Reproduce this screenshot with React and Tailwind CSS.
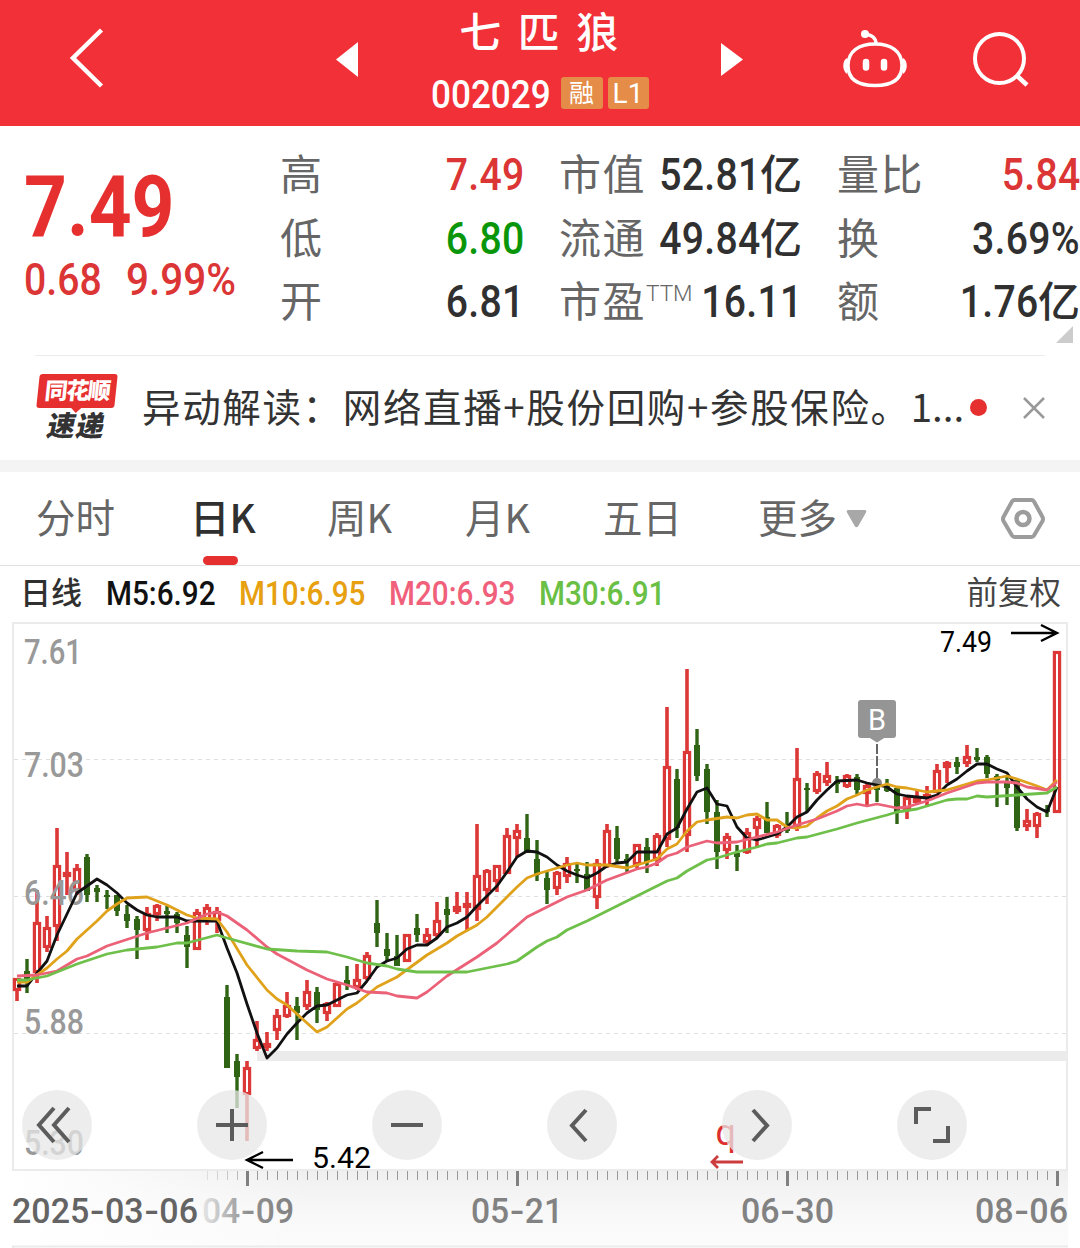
import React from "react";
import clsx from "clsx";

const RED = "#dc3838";
const GREEN = "#2f6414";

// [high, body top, body bottom, low, up(1) / down(0)], one candle every 10px
const candles = [
  [978, 978, 991, 1001, 1], [959, 971, 980, 993, 0], [890, 922, 973, 983, 1],
  [916, 927, 948, 952, 1], [828, 865, 927, 941, 1], [852, 872, 877, 895, 1],
  [864, 868, 891, 895, 1], [854, 857, 895, 902, 0], [885, 888, 892, 902, 0],
  [890, 895, 897, 909, 0], [895, 895, 911, 916, 0], [905, 914, 921, 928, 0],
  [916, 919, 930, 959, 0], [907, 913, 931, 940, 1], [904, 905, 915, 921, 1],
  [906, 911, 914, 933, 0], [912, 914, 923, 933, 0], [926, 935, 947, 968, 0],
  [909, 912, 950, 950, 1], [904, 907, 920, 925, 1], [907, 911, 921, 933, 1],
  [985, 997, 1068, 1068, 0], [1054, 1061, 1077, 1108, 0], [1061, 1067, 1095, 1141, 1],
  [1021, 1039, 1049, 1051, 1], [1032, 1043, 1048, 1051, 1], [1009, 1015, 1031, 1040, 1],
  [992, 1005, 1017, 1018, 1], [997, 1006, 1013, 1040, 0], [980, 991, 1007, 1010, 1],
  [987, 992, 1010, 1023, 0], [1002, 1003, 1014, 1021, 1], [982, 983, 1007, 1007, 1],
  [966, 980, 985, 990, 0], [964, 979, 988, 990, 1], [952, 955, 979, 980, 1],
  [900, 923, 933, 947, 0], [933, 949, 956, 962, 0], [935, 956, 966, 966, 0],
  [934, 934, 962, 962, 1], [914, 928, 935, 942, 0], [928, 934, 943, 946, 1],
  [902, 920, 936, 937, 1], [897, 909, 915, 933, 0], [892, 906, 912, 914, 1],
  [892, 903, 908, 930, 1], [824, 875, 910, 921, 1], [869, 870, 891, 904, 1],
  [865, 865, 882, 892, 1], [828, 835, 874, 874, 1], [824, 830, 839, 857, 1],
  [814, 838, 853, 853, 0], [840, 859, 875, 881, 0], [872, 878, 890, 904, 0],
  [871, 872, 889, 895, 1], [857, 863, 877, 883, 1], [864, 869, 871, 883, 0],
  [862, 874, 891, 891, 0], [859, 863, 898, 909, 1], [824, 830, 867, 868, 1],
  [826, 838, 859, 862, 0], [854, 859, 861, 872, 0], [844, 844, 865, 868, 1],
  [838, 847, 862, 873, 0], [833, 835, 860, 866, 1], [707, 766, 840, 847, 1],
  [769, 779, 828, 838, 0], [669, 751, 836, 852, 1], [729, 745, 776, 781, 0],
  [764, 769, 812, 824, 0], [800, 812, 852, 869, 0], [833, 836, 851, 859, 1],
  [845, 853, 857, 871, 0], [828, 832, 853, 854, 1], [816, 818, 829, 847, 1],
  [802, 817, 833, 833, 0], [824, 825, 836, 838, 1], [812, 825, 831, 833, 0],
  [748, 778, 827, 831, 1], [783, 788, 790, 812, 0], [771, 773, 792, 794, 1],
  [762, 775, 783, 786, 1], [776, 781, 784, 793, 0], [774, 775, 787, 788, 1],
  [774, 777, 790, 794, 0], [783, 785, 794, 805, 1], [783, 785, 790, 802, 0],
  [779, 786, 791, 792, 0], [788, 788, 812, 824, 0], [796, 797, 811, 819, 1],
  [791, 797, 803, 805, 1], [786, 794, 799, 807, 1], [764, 770, 793, 793, 1],
  [761, 762, 768, 783, 1], [757, 762, 767, 774, 0], [745, 756, 764, 767, 1],
  [748, 757, 760, 762, 0], [755, 757, 774, 778, 0], [774, 776, 780, 807, 0],
  [777, 783, 788, 805, 0], [780, 780, 828, 831, 0], [809, 820, 827, 831, 1],
  [812, 813, 827, 838, 1], [805, 809, 812, 817, 0], [651, 651, 813, 813, 1],
];

const averages = [
  {
    color: "#111111",
    points:
      "17,986 27,986 37,973 47,961 57,935 67,914 77,893 87,886 97,879 107,885 117,893 127,903 137,910 147,915 157,917 177,917 187,921 217,921 227,948 237,973 247,1004 257,1033 267,1058 277,1048 287,1034 297,1023 307,1013 317,1006 327,1005 337,1000 347,995 357,993 367,981 377,967 387,961 397,958 407,949 417,945 427,945 437,938 447,927 457,923 467,917 477,906 487,896 497,886 507,872 517,857 527,851 537,852 547,857 557,865 567,871 577,875 587,878 597,873 607,866 617,863 627,862 637,852 657,852 667,834 677,828 687,809 697,792 707,788 717,804 727,806 737,827 747,838 757,840 767,837 777,834 787,827 797,817 807,812 817,800 827,790 837,781 857,780 867,783 877,785 887,787 897,794 907,796 917,797 927,798 937,795 947,785 957,779 967,771 977,764 987,764 997,769 1007,773 1017,787 1027,799 1037,807 1047,812 1057,787",
  },
  {
    color: "#e0a11b",
    points:
      "17,982 27,982 37,975 47,968 57,959 67,951 77,939 97,921 107,911 117,904 127,898 147,897 167,905 187,915 197,918 217,919 227,932 247,965 267,990 277,999 287,1005 297,1014 317,1032 327,1027 347,1009 357,1003 377,987 397,977 427,955 447,943 457,936 477,925 487,917 517,887 527,878 537,874 567,865 577,863 587,865 607,865 627,868 647,862 657,859 667,849 677,844 687,831 697,822 707,820 727,817 737,818 747,815 757,814 767,820 777,820 787,827 797,828 807,826 817,818 827,811 837,806 847,799 857,795 867,790 887,784 897,787 907,788 927,792 947,790 977,781 987,780 1007,776 1017,779 1037,786 1047,790 1057,780",
  },
  {
    color: "#ea6178",
    points:
      "17,976 37,975 57,971 77,959 87,956 107,946 147,933 187,923 207,914 217,912 227,916 247,930 267,947 277,954 307,970 327,979 347,985 367,992 387,993 397,996 417,998 427,992 447,976 477,957 497,943 527,917 547,907 567,897 587,890 607,880 637,869 647,867 657,863 667,856 677,853 687,847 707,841 717,843 737,842 757,837 777,832 797,825 817,819 837,811 847,806 857,804 867,806 877,804 897,808 907,807 927,801 947,793 977,783 987,782 1007,782 1017,783 1027,787 1047,790 1057,782",
  },
  {
    color: "#6fbf4b",
    points:
      "17,980 27,980 47,976 77,964 107,954 127,950 157,947 177,943 187,943 217,935 227,938 267,949 297,951 327,952 347,957 367,963 387,966 397,969 417,972 467,972 487,968 507,964 517,961 537,947 547,941 557,937 567,930 587,921 617,906 647,891 657,886 667,881 677,878 687,871 707,860 717,858 737,852 757,847 767,844 777,843 797,838 807,837 837,829 857,823 887,815 897,812 917,809 947,800 957,799 967,799 977,796 987,797 1017,795 1047,793 1057,787",
  },
];

const priceLabels = [
  { text: "7.61", y: 664, w: 58 },
  { text: "7.03", y: 777, w: 60 },
  { text: "6.46", y: 905, w: 60 },
  { text: "5.88", y: 1034, w: 60 },
  { text: "5.30", y: 1155, w: 60 },
];

const dates = [
  { text: "2025-03-06", x: 12, w: 186, fill: "#646464" },
  { text: "04-09", x: 202, w: 92, fill: "url(#dateFade)" },
  { text: "05-21", x: 471, w: 92, fill: "#828282" },
  { text: "06-30", x: 741, w: 93, fill: "#828282" },
  { text: "08-06", x: 975, w: 93, fill: "#828282" },
];

const stats = [
  [
    { label: "高", value: "7.49", color: "text-[#dc3535]" },
    { label: "低", value: "6.80", color: "text-[#0a960a]" },
    { label: "开", value: "6.81" },
  ],
  [
    { label: "市值", value: "52.81", unit: "亿" },
    { label: "流通", value: "49.84", unit: "亿" },
    { label: "市盈", sup: "TTM", value: "16.11" },
  ],
  [
    { label: "量比", value: "5.84", color: "text-[#dc3535]" },
    { label: "换", value: "3.69%" },
    { label: "额", value: "1.76", unit: "亿" },
  ],
];

const Header = () => (
  <header className="grid h-[126px] grid-cols-[336px_22px_363px_22px_337px] bg-[#f13038] text-white">
    <div className="pl-[68px] pt-[26px]">
      <svg width="38" height="64" fill="none" stroke="white" strokeWidth="4.5">
        <path d="M33.500 4L5 32L33.500 60" />
      </svg>
    </div>
    <svg className="mt-[42px]" width="22" height="36" fill="white">
      <path d="M22 0V35L0 17.500Z" />
    </svg>
    <div className="flex flex-col items-center">
      <h1 className="mt-[2px] h-[56px] whitespace-pre pl-[2px] text-[42px] font-medium leading-[56px] tracking-[3.5px]">
        七 匹 狼
      </h1>
      <div className="mt-[19px] flex h-8 items-center gap-[5px]">
        <div className="flex w-[125px] justify-start">
          <span className="origin-left scale-x-[0.9] pt-[3px] font-[Roboto] text-[39px] font-medium leading-8">
            002029
          </span>
        </div>
        <span className="h-8 w-[42px] rounded-[3px] bg-[#e48c48] text-center text-[25px] leading-[29px]">
          融
        </span>
        <span className="h-8 w-[41px] rounded-[3px] bg-[#e48c48] text-center font-[Roboto] text-[28px] leading-[33px]">
          L1
        </span>
      </div>
    </div>
    <svg className="mt-[43px]" width="22" height="34" fill="white">
      <path d="M0 0V33L22 16.500Z" />
    </svg>
    <div className="flex gap-[62px] pl-[98px] pt-[26px]">
      <svg width="68" height="66" fill="none" stroke="white" strokeWidth="3.500">
        <path d="M34 18C50 18 61 25 61 39.500S50 59.500 34 59.500S7 54 7 39.500S18 18 34 18Z" />
        <path d="M35 18C35 12 31 8.500 24 8.500" strokeWidth="3.500" />
        <circle cx="24" cy="8" r="4" fill="white" stroke="none" />
        <path
          d="M6 32C1 34 1 45 6 48ZM62 32C67 34 67 45 62 48Z"
          fill="white"
          stroke="none"
        />
        <path d="M25 36V41.500M43 36V41.500" strokeWidth="6.500" strokeLinecap="round" />
      </svg>
      <svg width="62" height="66" fill="none" stroke="white" strokeWidth="4">
        <circle cx="28.500" cy="32.500" r="24.500" />
        <path d="M45 49L56 59" strokeWidth="4.500" />
      </svg>
    </div>
  </header>
);

const StatRow = ({ label, sup, value, unit, color = "text-[#303030]" }) => (
  <div className="flex h-[63.500px] items-center justify-between">
    <span className="-mt-1.5 flex shrink-0 text-[42px] leading-[63px] tracking-[1.5px] text-[#666]">
      {label}
      {sup && (
        <sup className="-mr-3 mt-[26px] font-[Roboto] text-[22.500px] font-light leading-none tracking-[0px]">
          {sup}
        </sup>
      )}
    </span>
    <span className={clsx("flex items-center font-medium", color)}>
      <span className="origin-right scale-x-[0.9] pt-0.5 font-[Roboto] text-[43.500px] leading-[63px] tracking-[0.3px]">
        {value}
      </span>
      {unit && <span className="-mt-1.5 text-[42px] leading-[63px]">{unit}</span>}
    </span>
  </div>
);

const Quote = () => (
  <section className="relative flex h-[229px] pt-[17px]">
    <div className="w-[280px] pl-[24px] pt-[19px]">
      <div className="origin-left scale-x-[0.87] font-[Roboto] text-[86px] font-bold leading-[90px] text-[#e63030]">
        7.49
      </div>
      <div className="flex pt-0.5 font-[Roboto] text-[43.500px] font-medium leading-[54px] text-[#dc3535]">
        <span className="w-[102px] origin-left scale-x-[0.9]">0.68</span>
        <span className="origin-left scale-x-[0.93]">9.99%</span>
      </div>
    </div>
    <div className="grid grid-cols-[244px_243px_243px] gap-[35px]">
      {stats.map((column, i) => (
        <div key={i}>
          {column.map((row) => (
            <StatRow key={row.label} {...row} />
          ))}
        </div>
      ))}
    </div>
    <svg className="absolute right-[7px] top-[200px]" width="17" height="17" fill="#ccc">
      <path d="M17 0V17H0Z" />
    </svg>
  </section>
);

const News = () => (
  <section className="flex h-[105px] px-[35px]">
    <div className="flex w-full items-start border-t border-[#ebebeb]">
      <div className="mt-[18px] flex w-[84px] shrink-0 flex-col items-center">
        <div className="relative flex h-[34px] w-[78px] -skew-x-6 items-center justify-center rounded-[3px] bg-[#e63030]">
          <span className="-mt-1 text-[23px] font-black leading-[34px] tracking-[-1.5px] text-white">
            同花顺
          </span>
          <svg className="absolute left-[34px] top-[33px]" width="12" height="6" fill="#e63030">
            <path d="M0 0H12L6 6Z" />
          </svg>
        </div>
        <span className="-skew-x-12 text-[28px] font-black leading-[32px] tracking-[1px] text-[#333]">
          速递
        </span>
      </div>
      <p className="ml-[23px] mt-[22px] w-[828px] shrink-0 whitespace-nowrap text-[38.500px] leading-[54px] tracking-[1.65px] text-[#333]">
        异动解读：网络直播+股份回购+参股保险。
        <span className="tracking-[0px]">1...</span>
      </p>
      <span className="mt-[43px] h-[17px] w-[17px] shrink-0 rounded-full bg-[#e63030]" />
      <svg className="ml-[35px] mt-[40px] shrink-0" width="24" height="24" stroke="#999" strokeWidth="2.500">
        <path d="M2 2L22 22M22 2L2 22" />
      </svg>
    </div>
  </section>
);

const tabs = [
  { name: "分时", width: "w-[154px]" },
  { name: "日K", width: "w-[137px]", active: true },
  { name: "周K", width: "w-[138px]" },
  { name: "月K", width: "w-[138px]" },
  { name: "五日", width: "w-[155px]" },
];

const Tabs = () => (
  <nav className="flex h-[94px] border-b border-[#e2e2e2] pl-[36px] text-[39.500px] leading-[88px] text-[#666]">
    {tabs.map((tab) => (
      <button
        key={tab.name}
        className={clsx("relative flex", tab.width, tab.active && "font-medium text-[#303030]")}
      >
        {tab.name}
        {tab.active && (
          <span className="absolute bottom-0 left-[13px] h-[9px] w-[35px] rounded-full bg-[#e63030]" />
        )}
      </button>
    ))}
    <button className="flex w-[242px]">
      更多
      <svg className="ml-[9px] mt-[38px]" width="21" height="18" fill="#a8a8a8">
        <path d="M1.500 0H19.500Q21 1 20 2.500L12 16.500Q10.500 18 9 16.500L1 2.500Q0 1 1.500 0Z" />
      </svg>
    </button>
    <svg className="mt-[25px]" width="46" height="44" fill="none" stroke="#9c9c9c" strokeWidth="4">
      <path d="M14.500 3H31.500Q33 3 34 4.500L42.500 20Q43.500 22 42.500 24L34 38.500Q33 40 31.500 40H14.500Q13 40 12 38.500L3.500 24Q2.500 22 3.500 20L12 4.500Q13 3 14.500 3Z" />
      <circle cx="23" cy="21.500" r="6.500" strokeWidth="4.500" />
    </svg>
  </nav>
);

const Legend = () => (
  <div className="flex h-[54px] items-center pl-[20px] pr-[19px]">
    <span className="-mt-1 w-[86px] text-[31px] font-medium text-[#303030]">日线</span>
    <span className="flex pt-0.5 font-[Roboto] text-[33px] font-medium">
      <span className="w-[133px] origin-left scale-x-[0.9] text-[#111]">M5:6.92</span>
      <span className="w-[150px] origin-left scale-x-[0.9] text-[#e6a010]">M10:6.95</span>
      <span className="w-[150px] origin-left scale-x-[0.9] text-[#f0607a]">M20:6.93</span>
      <span className="w-[150px] origin-left scale-x-[0.9] text-[#6abf45]">M30:6.91</span>
    </span>
    <span className="-mt-1 ml-auto text-[31.500px] text-[#444]">前复权</span>
  </div>
);

const Candle = ({ x, data: [high, top, bottom, low, up] }) =>
  up ? (
    <g stroke={RED} fill="none">
      <path d={`M${x} ${high}V${top + 1}M${x} ${bottom - 1}V${low}`} strokeWidth="3.600" />
      <rect
        x={x - 2.6}
        y={top + 1.5}
        width="5.200"
        height={Math.max(bottom - top - 3, 1)}
        strokeWidth="3.200"
      />
    </g>
  ) : (
    <g fill={GREEN}>
      <rect x={x - 1.7} y={high} width="3.400" height={low - high} />
      <rect x={x - 3} y={top} width="6" height={bottom - top} />
    </g>
  );

const controls = [
  "M32 18L17 35L32 52M47 18L32 35L47 52",
  "M19 35H51M35 19V51",
  "M19 35H51",
  "M39 20L25 35.500L39 51",
  "M31 20L45 35.500L31 51",
  "M19 34V19H34M51 36V51H36",
];

const Chart = () => (
  <section className="relative h-[628px]">
    <svg className="block" width="1080" height="628" viewBox="0 620 1080 628" fontFamily="Roboto, sans-serif">
      <defs>
        <linearGradient id="axisShade" x2="0" y2="1">
          <stop stopColor="#efefef" />
          <stop offset="0.6" stopColor="#f9f9f9" />
          <stop offset="1" stopColor="#fbfbfb" />
        </linearGradient>
        <linearGradient id="axisFade">
          <stop stopColor="#fff" />
          <stop offset="1" stopColor="#fff" stopOpacity="0" />
        </linearGradient>
        <linearGradient id="dateFade">
          <stop stopColor="#e6e6e6" />
          <stop offset="0.5" stopColor="#909090" />
          <stop offset="1" stopColor="#828282" />
        </linearGradient>
      </defs>

      {/* Time axis */}
      <rect x="13" y="1171" width="1055" height="75" fill="url(#axisShade)" />
      <rect x="13" y="1171" width="300" height="75" fill="url(#axisFade)" />
      {Array.from({ length: 86 }, (_, i) => {
        const x = 207 + i * 10;
        const major = (x - 247) % 270 === 0;
        return (
          <rect
            key={x}
            x={major ? x - 1 : x}
            y="1171"
            width={major ? 3 : 1}
            height={major ? 15 : 9}
            fill={major ? "#808080" : "#999"}
            opacity={x < 247 ? (x - 187) / 80 : 1}
          />
        );
      })}
      {dates.map((d) => (
        <text
          key={d.text}
          x={d.x}
          y="1223"
          fontSize="34.500"
          fontWeight="500"
          fill={d.fill}
          textLength={d.w}
          lengthAdjust="spacingAndGlyphs"
        >
          {d.text.split(/(-)/).map((part, i) =>
            part === "-" ? (
              <tspan key={i} fontFamily="Inter, sans-serif">-</tspan>
            ) : (
              part
            )
          )}
        </text>
      ))}

      {/* Frame and grid */}
      <path d="M13 1248V1246.500H1068" fill="none" stroke="#ebebeb" strokeWidth="2" />
      <rect x="13" y="623" width="1054" height="547" fill="none" stroke="#ebebeb" strokeWidth="2" />
      <path
        d="M14 759.500H1066M14 896.500H1066M14 1033.500H1066"
        stroke="#dfdfdf"
        strokeDasharray="4 4"
      />
      <rect x="257" y="1051" width="811" height="10" fill="#ebebeb" />

      {candles.map((data, i) => (
        <Candle key={i} x={17 + i * 10} data={data} />
      ))}

      {priceLabels.map((p) => (
        <text
          key={p.text}
          x="24"
          y={p.y}
          fontSize="34.500"
          fontWeight="500"
          fill="#999"
          textLength={p.w}
          lengthAdjust="spacingAndGlyphs"
        >
          {p.text}
        </text>
      ))}

      {/* Buy marker */}
      <path d="M877 744V780" stroke="#666" strokeWidth="2" strokeDasharray="10 2" />
      <circle cx="877" cy="783" r="5" fill="#888" />
      <rect x="858" y="700" width="38" height="38" rx="3" fill="#959595" />
      <path d="M869 737.500H885L877 742.500Z" fill="#959595" />
      <text x="877" y="730" fontSize="29" fill="#fff" textAnchor="middle">B</text>

      {averages.map((line) => (
        <polyline
          key={line.color}
          points={line.points}
          fill="none"
          stroke={line.color}
          strokeWidth="2.800"
          strokeLinejoin="round"
        />
      ))}

      {/* High and low marks */}
      <g fill="none" stroke="#000" strokeWidth="2.400">
        <path d="M1011 633H1057M1041 625L1057 633L1041 641" />
        <path d="M293 1160H247M263 1152L247 1160L263 1168" />
      </g>
      <text x="940" y="652" fontSize="29.500" textLength="52" lengthAdjust="spacingAndGlyphs">7.49</text>
      <text x="312" y="1168" fontSize="29.500" textLength="59" lengthAdjust="spacingAndGlyphs">5.42</text>
      <text x="715.500" y="1145" fontSize="36" fill="#dc3030">q</text>
      <path d="M743 1162H712M718 1156L712 1162L718 1168" fill="none" stroke="#cc3c3c" strokeWidth="2.800" />
    </svg>

    {/* Chart controls */}
    <div className="absolute left-[22px] top-[470px] flex gap-[105px]">
      {controls.map((d) => (
        <button key={d} className="h-[70px] w-[70px] rounded-full bg-[#e7e7e7]/75">
          <svg width="70" height="70" fill="none" stroke="#5c5c5c" strokeWidth="4">
            <path d={d} />
          </svg>
        </button>
      ))}
    </div>
  </section>
);

const App = () => (
  <main className="h-[1248px] w-[1080px] overflow-hidden bg-white font-['Noto_Sans_CJK_SC',sans-serif]">
    <Header />
    <Quote />
    <News />
    <div className="h-3 bg-[#f4f4f4]" />
    <Tabs />
    <Legend />
    <Chart />
  </main>
);

export default App;
